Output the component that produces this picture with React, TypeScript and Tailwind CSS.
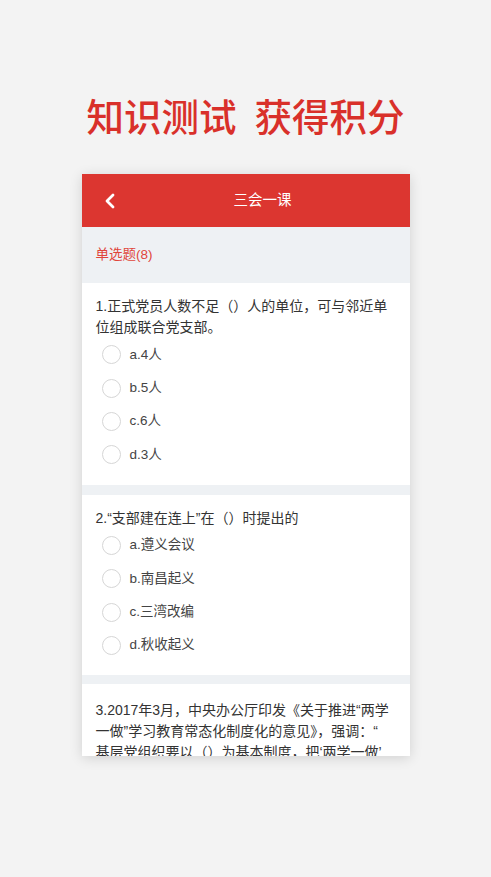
import React from "react";

const Radio = () => (
  <span className="inline-block w-[19px] h-[19px] rounded-full border-[1.5px] border-[#d6d6d6] bg-white shrink-0" />
);

const Option = ({ label }: { label: string }) => (
  <div className="flex items-center h-[33.4px] pl-[6px] gap-[9px]">
    <Radio />
    <span className="text-[13.5px] text-[#444]">{label}</span>
  </div>
);

const Question = ({ text, options, pt, pb }: { text: React.ReactNode; options?: string[]; pt: string; pb: string }) => (
  <div className={`bg-white px-[14px] ${pt} ${pb}`}>
    <p className="text-[14px] leading-[21px] text-[#333]">{text}</p>
    {options && options.map((o) => <Option key={o} label={o} />)}
  </div>
);

export default function App() {
  return (
    <div
      className="w-[491px] h-[877px] bg-[#f3f3f3] overflow-hidden flex flex-col items-center"
      style={{ fontFamily: '"Liberation Sans", "Noto Sans CJK SC", sans-serif' }}
    >
      <h1
        className="mt-[90px] h-[50px] text-[37.5px] leading-[50px] font-medium text-[#d9302a] flex gap-[18px]"
        style={{ fontFamily: '"Noto Sans CJK SC", sans-serif' }}
      >
        <span>知识测试</span>
        <span>获得积分</span>
      </h1>
      <div className="mt-[34px] w-[328px] h-[582px] bg-white overflow-hidden shadow-[0_2px_12px_rgba(0,0,0,0.14)] flex flex-col">
        <div className="h-[53px] bg-[#dc3630] flex items-center shrink-0">
          <svg className="ml-[22px]" width="12" height="16" viewBox="0 0 12 16">
            <path d="M9 2 L3 8 L9 14" fill="none" stroke="#fff" strokeWidth="2.8" strokeLinecap="round" strokeLinejoin="round" />
          </svg>
          <span className="ml-[118px] text-[14.5px] text-white">三会一课</span>
        </div>
        <div className="h-[56px] bg-[#eef1f4] px-[14px] pt-[15px] shrink-0">
          <span className="text-[13.5px] leading-[20px] text-[#e0453b]">单选题(8)</span>
        </div>
        <Question
          text="1.正式党员人数不足（）人的单位，可与邻近单位组成联合党支部。"
          options={["a.4人", "b.5人", "c.6人", "d.3人"]}
          pt="pt-[13px]"
          pb="pb-[13px]"
        />
        <div className="h-[10px] bg-[#eef1f4] shrink-0" />
        <Question
          text="2.“支部建在连上”在（）时提出的"
          options={["a.遵义会议", "b.南昌起义", "c.三湾改编", "d.秋收起义"]}
          pt="pt-[13px]"
          pb="pb-[13px]"
        />
        <div className="h-[9px] bg-[#eef1f4] shrink-0" />
        <Question
          text={
            <>
              <span className="block whitespace-nowrap">3.2017年3月，中央办公厅印发《关于推进“两学</span>
              <span className="block whitespace-nowrap">一做”学习教育常态化制度化的意见》，强调：“</span>
              <span className="block whitespace-nowrap">基层党组织要以（）为基本制度，把‘两学一做’</span>
            </>
          }
          pt="pt-[16px]"
          pb="pb-[14px]"
        />
      </div>
    </div>
  );
}
